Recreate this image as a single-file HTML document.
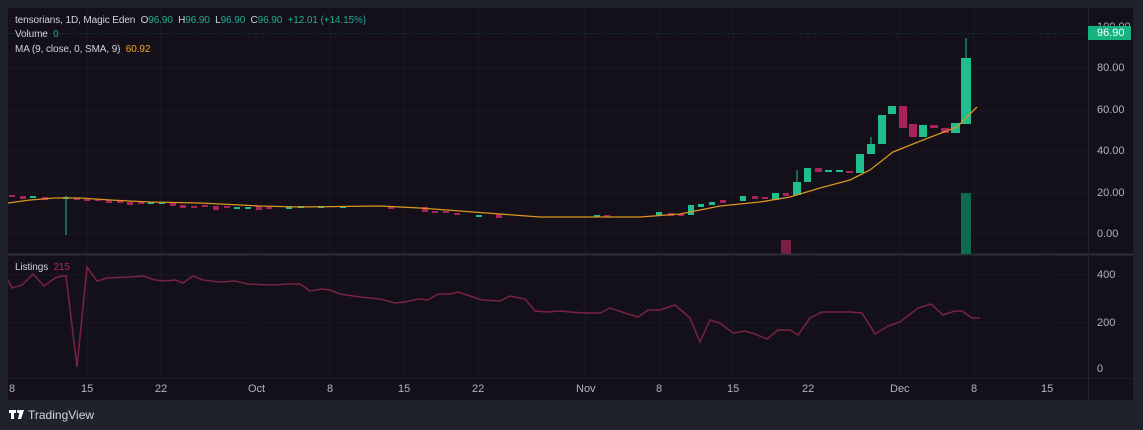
<!DOCTYPE html>
<html><head><style>
body{margin:0;width:1143px;height:430px;background:#1f222d;overflow:hidden;font-family:"Liberation Sans",sans-serif}
.t{position:absolute;font-size:11px;color:#b2b5be;white-space:nowrap}
.h{font-size:10px;letter-spacing:-0.1px}
</style></head><body>
<svg width="1143" height="430" style="position:absolute;left:0;top:0">
<rect x="8" y="8" width="1125" height="392" fill="#131019"/>
<g stroke="#1b1922" stroke-width="1">
<line x1="8" y1="68" x2="1088" y2="68"/><line x1="8" y1="110" x2="1088" y2="110"/><line x1="8" y1="151" x2="1088" y2="151"/><line x1="8" y1="193" x2="1088" y2="193"/><line x1="8" y1="234" x2="1088" y2="234"/>
<line x1="8" y1="275" x2="1088" y2="275"/><line x1="8" y1="323" x2="1088" y2="323"/>
<line x1="87" y1="8" x2="87" y2="378"/><line x1="161" y1="8" x2="161" y2="378"/><line x1="256" y1="8" x2="256" y2="378"/><line x1="330" y1="8" x2="330" y2="378"/><line x1="404" y1="8" x2="404" y2="378"/><line x1="478" y1="8" x2="478" y2="378"/><line x1="585" y1="8" x2="585" y2="378"/><line x1="659" y1="8" x2="659" y2="378"/><line x1="733" y1="8" x2="733" y2="378"/><line x1="808" y1="8" x2="808" y2="378"/><line x1="899" y1="8" x2="899" y2="378"/><line x1="974" y1="8" x2="974" y2="378"/><line x1="1048" y1="8" x2="1048" y2="378"/>
</g>
<line x1="8" y1="254.5" x2="1133" y2="254.5" stroke="#2a2e39" stroke-width="2"/>
<line x1="8" y1="378.5" x2="1133" y2="378.5" stroke="#1e1d26"/>
<line x1="1088.5" y1="8" x2="1088.5" y2="400" stroke="#24222c"/>
<line x1="8" y1="33.5" x2="1088" y2="33.5" stroke="#22ab94" stroke-opacity=".35" stroke-dasharray="1 2"/>
<rect x="781" y="240" width="10" height="14" fill="#7a1f43"/>
<rect x="961" y="193" width="10" height="61" fill="#0d6b4e"/>
<g fill="#a8235a">
<rect x="9" y="195" width="6" height="2"/><rect x="20" y="196" width="6" height="3"/><rect x="42" y="197" width="6" height="3"/><rect x="74" y="198" width="6" height="2"/><rect x="84" y="199" width="6" height="2"/><rect x="95" y="199" width="6" height="2"/><rect x="106" y="200" width="6" height="3"/><rect x="117" y="201" width="6" height="2"/><rect x="127" y="202" width="6" height="3"/><rect x="138" y="202" width="6" height="2"/><rect x="170" y="203" width="6" height="3"/><rect x="180" y="205" width="6" height="3"/><rect x="191" y="206" width="6" height="2"/><rect x="202" y="205" width="6" height="2"/><rect x="213" y="206" width="6" height="4"/><rect x="224" y="206" width="6" height="2"/><rect x="256" y="206" width="6" height="4"/><rect x="266" y="207" width="6" height="2"/><rect x="388" y="206" width="6" height="3"/><rect x="422" y="207" width="6" height="5"/><rect x="432" y="211" width="6" height="2"/><rect x="443" y="211" width="6" height="2"/><rect x="454" y="213" width="6" height="2"/><rect x="496" y="214" width="6" height="4"/><rect x="604" y="215" width="6" height="2"/><rect x="668" y="213" width="6" height="3"/><rect x="678" y="214" width="6" height="2"/><rect x="720" y="200" width="6" height="3"/><rect x="752" y="196" width="6" height="3"/><rect x="762" y="197" width="6" height="2"/><rect x="783" y="193" width="6" height="3"/><rect x="815" y="168" width="7" height="4"/><rect x="846" y="171" width="7" height="2"/>
<rect x="899" y="106" width="8" height="22"/><rect x="909" y="124" width="8" height="13"/><rect x="930" y="125" width="8" height="3"/><rect x="941" y="128" width="8" height="5"/>
</g>
<g fill="#1fbf8d">
<rect x="30" y="196" width="6" height="2"/><rect x="63" y="197" width="6" height="2"/><rect x="148" y="202" width="6" height="2"/><rect x="159" y="202" width="6" height="2"/><rect x="234" y="207" width="6" height="2"/><rect x="245" y="207" width="6" height="2"/><rect x="286" y="207" width="6" height="2"/><rect x="298" y="206" width="6" height="2"/><rect x="318" y="206" width="6" height="2"/><rect x="340" y="206" width="6" height="2"/><rect x="476" y="215" width="6" height="2"/><rect x="594" y="215" width="6" height="2"/><rect x="656" y="212" width="6" height="4"/><rect x="688" y="205" width="6" height="10"/><rect x="698" y="204" width="6" height="3"/><rect x="709" y="202" width="6" height="3"/><rect x="740" y="196" width="6" height="5"/><rect x="772" y="193" width="7" height="7"/>
<rect x="793" y="182" width="8" height="13"/><rect x="804" y="168" width="7" height="14"/><rect x="825" y="170" width="7" height="2"/><rect x="836" y="170" width="7" height="2"/><rect x="856" y="154" width="8" height="19"/><rect x="867" y="144" width="8" height="10"/><rect x="878" y="115" width="8" height="29"/><rect x="888" y="106" width="8" height="8"/><rect x="919" y="125" width="8" height="12"/><rect x="951" y="123" width="9" height="10"/><rect x="961" y="58" width="10" height="66"/>
</g>
<g stroke="#1fbf8d" stroke-width="1"><line x1="66" y1="196" x2="66" y2="235"/><line x1="966" y1="38" x2="966" y2="58"/><line x1="797" y1="170" x2="797" y2="182"/><line x1="871" y1="137" x2="871" y2="144"/></g>
<polyline fill="none" stroke="#d9951f" stroke-width="1.3" points="8,203 30,200 55,198 80,198 110,200 150,202 200,203 260,206 300,207 380,206 420,208 460,211 500,214 540,217 580,217 640,217 680,214 700,210 720,206 760,202 790,197 820,188 850,180 870,170 893,152 923,140 957,127 977,107"/>
<polyline fill="none" stroke="#7a2245" stroke-width="1.5" points="8,280 12,288 22,285 33,274 44,286 55,278 62,276 66,276 77,367 87,267 97,281 107,278 130,277 143,276 155,280 165,281 175,280 183,283 193,276 203,280 220,282 235,281 248,284 270,285 290,284 300,284 310,291 322,289 330,290 340,294 360,297 380,299 395,303 405,302 418,299 428,300 438,294 450,294 458,292 470,296 482,300 500,301 510,296 525,299 535,311 547,312 560,311 570,312 585,313 600,313 610,308 625,313 638,317 648,310 660,310 675,305 690,318 700,342 710,320 720,323 733,333 745,331 755,334 767,339 778,330 790,330 798,335 810,318 822,312 835,312 850,312 862,313 875,334 888,326 900,322 918,308 931,304 943,315 955,311 962,311 972,318 980,318"/>
<rect x="1088" y="26" width="43" height="14" fill="#14b37f"/>
<g fill="#fff"><path d="M9 410h7v3h-2v6h-3v-6h-2z"/><circle cx="18.5" cy="411.5" r="1.6"/><path d="M20 410h4l-3 9h-3z"/></g>
</svg>
<div class="t h" style="left:15px;top:15px;color:#d1d4dc">tensorians, 1D, Magic Eden&nbsp; O<span style="color:#22ab94">96.90</span>&nbsp; H<span style="color:#22ab94">96.90</span>&nbsp; L<span style="color:#22ab94">96.90</span>&nbsp; C<span style="color:#22ab94">96.90</span>&nbsp; <span style="color:#22ab94">+12.01 (+14.15%)</span></div>
<div class="t h" style="left:15px;top:29px;color:#d1d4dc">Volume&nbsp; <span style="color:#22ab94">0</span></div>
<div class="t h" style="left:15px;top:44px;color:#d1d4dc">MA (9, close, 0, SMA, 9)&nbsp; <span style="color:#f5a623">60.92</span></div>
<div class="t h" style="left:15px;top:262px;color:#d1d4dc">Listings&nbsp; <span style="color:#b0245f">215</span></div>
<div class="t" style="left:1097px;top:21px;clip-path:inset(0 0 60% 0)">100.00</div>
<div class="t" style="left:1097px;top:27px;color:#fff">96.90</div>
<div class="t" style="left:1097px;top:62px">80.00</div>
<div class="t" style="left:1097px;top:104px">60.00</div>
<div class="t" style="left:1097px;top:145px">40.00</div>
<div class="t" style="left:1097px;top:187px">20.00</div>
<div class="t" style="left:1097px;top:228px">0.00</div>
<div class="t" style="left:1097px;top:269px">400</div>
<div class="t" style="left:1097px;top:317px">200</div>
<div class="t" style="left:1097px;top:363px">0</div>
<div class="t" style="left:9px;top:383px">8</div>
<div class="t" style="left:81px;top:383px">15</div>
<div class="t" style="left:155px;top:383px">22</div>
<div class="t" style="left:248px;top:383px">Oct</div>
<div class="t" style="left:327px;top:383px">8</div>
<div class="t" style="left:398px;top:383px">15</div>
<div class="t" style="left:472px;top:383px">22</div>
<div class="t" style="left:576px;top:383px">Nov</div>
<div class="t" style="left:656px;top:383px">8</div>
<div class="t" style="left:727px;top:383px">15</div>
<div class="t" style="left:802px;top:383px">22</div>
<div class="t" style="left:890px;top:383px">Dec</div>
<div class="t" style="left:971px;top:383px">8</div>
<div class="t" style="left:1041px;top:383px">15</div>
<div class="t" style="left:28px;top:408px;color:#d1d4dc;font-size:12px">TradingView</div>
</body></html>
